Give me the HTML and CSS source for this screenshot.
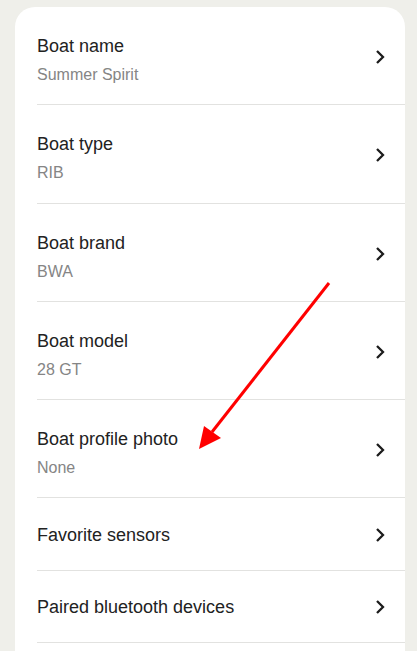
FILE: index.html
```html
<!DOCTYPE html>
<html lang="en">
<head>
    <meta charset="UTF-8">
    <meta name="viewport" content="width=device-width, initial-scale=1.0">
    <title>Boat settings</title>
    <link rel="stylesheet" href="styles.css">
</head>
<body>

<div class="settings-card">
    <a class="setting-row" href="#">
        <div class="setting-text">
            <div class="setting-title">Boat name</div>
            <div class="setting-value">Summer Spirit</div>
        </div>
        <svg class="chevron" viewBox="0 0 10 16"><path d="M2 2 L8 8 L2 14"/></svg>
    </a>
    <a class="setting-row" href="#">
        <div class="setting-text">
            <div class="setting-title">Boat type</div>
            <div class="setting-value">RIB</div>
        </div>
        <svg class="chevron" viewBox="0 0 10 16"><path d="M2 2 L8 8 L2 14"/></svg>
    </a>
    <a class="setting-row" href="#">
        <div class="setting-text">
            <div class="setting-title">Boat brand</div>
            <div class="setting-value">BWA</div>
        </div>
        <svg class="chevron" viewBox="0 0 10 16"><path d="M2 2 L8 8 L2 14"/></svg>
    </a>
    <a class="setting-row" href="#">
        <div class="setting-text">
            <div class="setting-title">Boat model</div>
            <div class="setting-value">28 GT</div>
        </div>
        <svg class="chevron" viewBox="0 0 10 16"><path d="M2 2 L8 8 L2 14"/></svg>
    </a>
    <a class="setting-row" href="#">
        <div class="setting-text">
            <div class="setting-title">Boat profile photo</div>
            <div class="setting-value">None</div>
        </div>
        <svg class="chevron" viewBox="0 0 10 16"><path d="M2 2 L8 8 L2 14"/></svg>
    </a>
    <a class="setting-row single" href="#">
        <div class="setting-text">
            <div class="setting-title">Favorite sensors</div>
        </div>
        <svg class="chevron" viewBox="0 0 10 16"><path d="M2 2 L8 8 L2 14"/></svg>
    </a>
    <a class="setting-row single" href="#">
        <div class="setting-text">
            <div class="setting-title">Paired bluetooth devices</div>
        </div>
        <svg class="chevron" viewBox="0 0 10 16"><path d="M2 2 L8 8 L2 14"/></svg>
    </a>
</div>

<!-- annotation arrow drawn over the screenshot -->
<svg class="annotation" viewBox="0 0 417 651">
    <line x1="329" y1="283" x2="212" y2="432" />
    <polygon points="199,449 204,426 221,438" />
</svg>

</body>
</html>
```

FILE: styles.css
```css
body {
    font-family: "Liberation Sans", Arial, sans-serif;
    background-color: #efefea;
    margin: 0;
    padding: 7px 12px 0 15px;
    height: 651px;
    overflow: hidden;
    box-sizing: border-box;
}
.settings-card {
    background-color: white;
    border-radius: 20px;
    min-height: 700px;
}
.setting-row {
    display: flex;
    align-items: center;
    margin-left: 22px;
    padding: 28px 20px 18.25px 0;
    border-bottom: 1px solid #e2e2e0;
    text-decoration: none;
    color: inherit;
}
.setting-row.single {
    padding: 25.5px 20px 24px 0;
}
.setting-text {
    flex: 1;
    display: flex;
    flex-direction: column;
    gap: 7px;
}
.setting-title {
    font-size: 18px;
    line-height: 22px;
    color: #222222;
}
.setting-value {
    font-size: 16px;
    line-height: 22px;
    color: #858585;
}
.chevron {
    width: 10px;
    height: 16px;
    margin-bottom: 7px;
    fill: none;
    stroke: #1c1c1c;
    stroke-width: 2.3;
}
.single .chevron {
    margin-bottom: 0;
}
.annotation {
    position: absolute;
    top: 0;
    left: 0;
    width: 417px;
    height: 651px;
    pointer-events: none;
}
.annotation line {
    stroke: #ff0000;
    stroke-width: 3;
}
.annotation polygon {
    fill: #ff0000;
}
```
